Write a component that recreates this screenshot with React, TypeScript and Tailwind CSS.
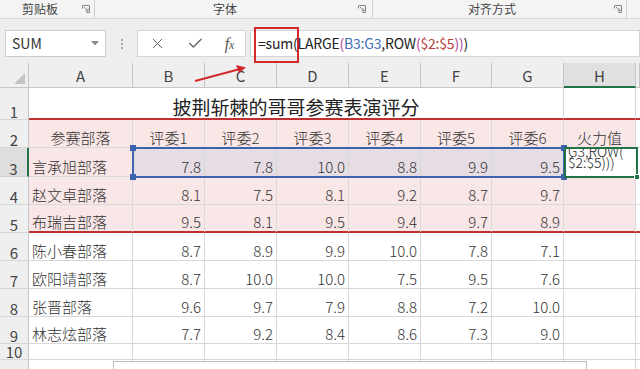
import React from "react";
import { X, Check } from "lucide-react";

const colW = [104, 72, 72, 72, 72, 71, 72, 72, 4];
const rowH = [32, 28, 29, 28, 28, 28, 28, 28, 27, 16, 20];
const letters = ["A", "B", "C", "D", "E", "F", "G", "H", ""];

const judges = ["评委1", "评委2", "评委3", "评委4", "评委5", "评委6"];

const rows: [string, string[]][] = [
  ["言承旭部落", ["7.8", "7.8", "10.0", "8.8", "9.9", "9.5"]],
  ["赵文卓部落", ["8.1", "7.5", "8.1", "9.2", "8.7", "9.7"]],
  ["布瑞吉部落", ["9.5", "8.1", "9.5", "9.4", "9.7", "8.9"]],
  ["陈小春部落", ["8.7", "8.9", "9.9", "10.0", "7.8", "7.1"]],
  ["欧阳靖部落", ["8.7", "10.0", "10.0", "7.5", "9.5", "7.6"]],
  ["张晋部落", ["9.6", "9.7", "7.9", "8.8", "7.2", "10.0"]],
  ["林志炫部落", ["7.7", "9.2", "8.4", "8.6", "7.3", "9.0"]],
];

const Launcher = () => (
  <svg width="8" height="8" viewBox="0 0 8 8" className="text-[#888]">
    <path d="M0.5 3.5V0.5H7.5V7.5H4.5" fill="none" stroke="currentColor" />
    <path d="M2 2L6 6M6 3.5V6H3.5" fill="none" stroke="currentColor" />
  </svg>
);

const RowHead = ({ n, h, active }: { n: string; h: number; active?: boolean }) => (
  <div
    style={{ height: h }}
    className={
      active
        ? "w-[29px] shrink-0 flex items-end justify-center bg-[#dedede] border-b border-[#cfcfcf] border-r-2 border-r-[#217346] text-[15px] leading-[14px] text-[#444]"
        : "w-[29px] shrink-0 flex items-end justify-center bg-[#efefef] border-b border-[#d6d6d6] border-r border-r-[#c6c6c6] text-[15px] leading-[14px] text-[#444]"
    }
  >
    {n}
  </div>
);

const Cell = ({
  w,
  h,
  text,
  align = "end",
  bg = "",
  red = false,
}: {
  w: number;
  h: number;
  text?: string;
  align?: "start" | "end" | "center";
  bg?: string;
  red?: boolean;
}) => (
  <div
    style={{ width: w, height: h }}
    className={
      "shrink-0 flex items-end px-[3px] pb-[2px] border-r border-[#d8d8d8] text-[15px] text-[#333] leading-[14px] font-light whitespace-nowrap " +
      (red ? "border-b-2 border-b-[#c0302f] " : "border-b ") +
      (align === "end" ? "justify-end " : align === "center" ? "justify-center " : "justify-start ") +
      bg
    }
  >
    {text}
  </div>
);

export default function App() {
  return (
    <div className="relative w-[640px] h-[369px] overflow-hidden bg-white font-['Noto_Sans_CJK_SC',sans-serif]">
      {/* ribbon group labels */}
      <div className="h-[19px] bg-[#f4f4f4] border-b border-[#d9d9d9] flex text-[12px] text-[#444]">
        <div className="w-[95px] border-r border-[#d0d0d0] flex items-center justify-between pl-[22px] pr-[4px]">
          <span>剪贴板</span>
          <Launcher />
        </div>
        <div className="w-[278px] border-r border-[#d0d0d0] flex items-center justify-between pl-[118px] pr-[6px]">
          <span>字体</span>
          <Launcher />
        </div>
        <div className="w-[254px] border-r border-[#d0d0d0] flex items-center justify-between pl-[95px] pr-[4px]">
          <span>对齐方式</span>
          <Launcher />
        </div>
      </div>

      {/* formula bar */}
      <div className="h-[44px] bg-[#eeeeee] flex items-start pt-[11px] pl-[5px]">
        <div className="w-[101px] h-[27px] bg-white border border-[#cdcdcd] flex items-center justify-between pl-[6px] pr-[6px] text-[14px] text-[#333]">
          <span>SUM</span>
          <svg width="8" height="5" viewBox="0 0 8 5">
            <path d="M0 0H8L4 4.5Z" fill="#8a8a8a" />
          </svg>
        </div>
        <div className="w-[31px] h-[27px] flex flex-col items-center justify-center gap-[2px]">
          <span className="w-[2px] h-[2px] bg-[#aaa]" />
          <span className="w-[2px] h-[2px] bg-[#aaa]" />
          <span className="w-[2px] h-[2px] bg-[#aaa]" />
        </div>
        <div className="w-[109px] h-[27px] bg-white border border-[#d6d6d6] flex items-center justify-around text-[#666]">
          <X size={17} strokeWidth={1.4} />
          <Check size={17} strokeWidth={2} />
          <span className="font-['Liberation_Serif',serif] italic text-[16px] text-[#555]">
            f<span className="text-[12px]">x</span>
          </span>
        </div>
        <div className="ml-[4px] flex-1 h-[27px] bg-white border border-[#d6d6d6] flex items-center pl-[7px] text-[14px] tracking-[-0.2px] text-[#222] whitespace-nowrap">
          <span>=sum(LARGE</span>
          <span className="text-[#b3489c]">(</span>
          <span className="text-[#3f6fb8]">B3:G3</span>
          <span>,ROW</span>
          <span className="text-[#b3489c]">(</span>
          <span className="text-[#b9403c]">$2:$5</span>
          <span className="text-[#b3489c]">)</span>
          <span className="text-[#b3489c]">)</span>
          <span>)</span>
        </div>
      </div>

      {/* sheet */}
      <div className="flex flex-col">
        {/* column headers */}
        <div className="flex h-[25px]">
          <div className="w-[29px] shrink-0 bg-[#efefef] border-r border-b border-[#c6c6c6] flex items-end justify-end p-[3px]">
            <svg width="11" height="11" viewBox="0 0 11 11">
              <path d="M11 0V11H0Z" fill="#c4c4c4" />
            </svg>
          </div>
          {letters.map((l, i) => (
            <div
              key={i}
              style={{ width: colW[i] }}
              className={
                l === "H"
                  ? "shrink-0 bg-[#e0e0e0] border-r border-[#c6c6c6] border-b-2 border-b-[#217346] flex items-center justify-center pt-[4px] text-[15px] text-[#444]"
                  : "shrink-0 bg-[#efefef] border-r border-b border-[#c6c6c6] flex items-center justify-center pt-[3px] text-[15px] text-[#444]"
              }
            >
              {l}
            </div>
          ))}
        </div>

        {/* row 1 */}
        <div className="flex">
          <RowHead n="1" h={rowH[0]} />
          <div
            style={{ height: rowH[0] }}
            className="w-[535px] shrink-0 flex items-end justify-center pb-[2px] border-r border-[#d8d8d8] border-b-2 border-b-[#c0302f] text-[19px] text-[#222] leading-none"
          >
            披荆斩棘的哥哥参赛表演评分
          </div>
          <Cell w={72} h={rowH[0]} red />
          <Cell w={4} h={rowH[0]} red />
        </div>

        {/* row 2 */}
        <div className="flex">
          <RowHead n="2" h={rowH[1]} />
          <Cell w={104} h={rowH[1]} text="参赛部落" align="center" bg="bg-[#f9e6e6]" />
          {judges.map((j, i) => (
            <Cell key={j} w={colW[i + 1]} h={rowH[1]} text={j} align="center" bg="bg-[#f9e6e6]" />
          ))}
          <Cell w={72} h={rowH[1]} text="火力值" align="center" bg="bg-[#f9e6e6]" />
          <Cell w={4} h={rowH[1]} />
        </div>

        {/* data rows */}
        {rows.map(([name, vals], r) => {
          const h = rowH[r + 2];
          const pink = r < 3;
          const sel = r === 0;
          return (
            <div className="flex" key={name}>
              <RowHead n={String(r + 3)} h={h} active={sel} />
              <Cell w={104} h={h} text={name} align="start" bg={pink ? "bg-[#f9e6e6]" : ""} red={r === 2} />
              {vals.map((v, i) => (
                <Cell
                  key={i}
                  w={colW[i + 1]}
                  h={h}
                  text={v}
                  bg={sel ? "bg-[#e6dce4]" : pink ? "bg-[#f9e6e6]" : ""}
                  red={r === 2}
                />
              ))}
              <Cell w={72} h={h} bg={pink ? "bg-[#f9e6e6]" : ""} red={r === 2} />
              <Cell w={4} h={h} red={r === 2} />
            </div>
          );
        })}

        {/* rows 10, 11 */}
        {[10, 11].map((n) => (
          <div className="flex" key={n}>
            <RowHead n={n === 10 ? "10" : ""} h={rowH[n - 1]} />
            {colW.map((w, i) => (
              <Cell key={i} w={w} h={rowH[n - 1]} />
            ))}
          </div>
        ))}
      </div>

      {/* selection B3:G3 */}
      <div className="absolute left-[132px] top-[147px] w-[433px] h-[31px] border-2 border-[#3b63ae]" />
      <div className="absolute left-[130px] top-[145px] w-[6px] h-[6px] bg-[#3b63ae]" />
      <div className="absolute left-[130px] top-[174px] w-[6px] h-[6px] bg-[#3b63ae]" />
      <div className="absolute left-[561px] top-[145px] w-[6px] h-[6px] bg-[#3b63ae]" />
      <div className="absolute left-[561px] top-[174px] w-[6px] h-[6px] bg-[#3b63ae]" />

      {/* active cell H3 in edit */}
      <div className="absolute left-[564px] top-[147px] w-[74px] h-[31px] border-2 border-[#217346] bg-white overflow-hidden text-[14px] leading-[11px] font-light text-[#222] pl-[2px]">
        <div className="-mt-[3px]">G3,ROW(</div>
        <div>$2:$5)))</div>
      </div>
      <div className="absolute left-[634px] top-[174px] w-[6px] h-[6px] bg-[#217346] border border-white" />

      {/* annotation */}
      <div className="absolute left-[254px] top-[27px] w-[45px] h-[36px] border-2 border-[#d22a2a]" />
      <svg className="absolute left-0 top-0" width="640" height="369" viewBox="0 0 640 369">
        <path d="M195 81L240 69" stroke="#d22a2a" strokeWidth="2" fill="none" />
        <path d="M246 67.5L236 65L239 73Z" fill="#d22a2a" />
      </svg>

      {/* tooltip */}
      <div className="absolute left-[113px] top-[361px] w-[474px] h-[20px] bg-white border border-[#bdbdbd]" />
    </div>
  );
}
